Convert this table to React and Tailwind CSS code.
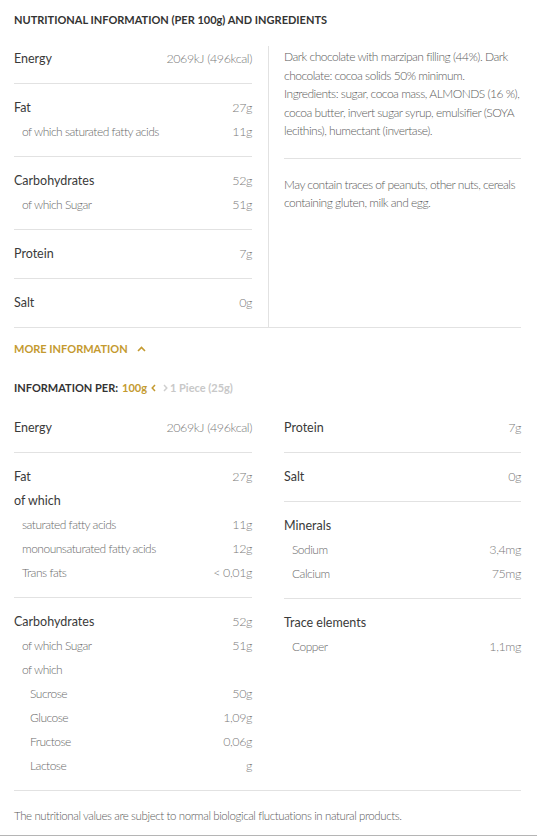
import React from "react";

const Row = ({ label, value, indent = 0 }) => (
  <div className="flex h-6 items-center justify-between">
    <span
      className={
        indent === 2
          ? "pl-4 text-[12px] font-light tracking-[-0.5px] text-[#6a6a6a]"
          : indent === 1
          ? "pl-2 text-[12px] font-light tracking-[-0.5px] text-[#6a6a6a]"
          : "text-[12.5px] text-[#3a3a3a]"
      }
    >
      {label}
    </span>
    <span className="text-[12.5px] font-light tracking-[-0.4px] text-[#7a7a7a]">{value}</span>
  </div>
);

const Group = ({ children, border = true }) => (
  <div className={"py-3 " + (border ? "border-b border-[#e2e2e2]" : "")}>{children}</div>
);

const ChevronUp = ({ className }) => (
  <svg className={className} width="9" height="6" viewBox="0 0 9 6" fill="none">
    <path d="M1 5 L4.5 1.5 L8 5" stroke="currentColor" strokeWidth="1.6" />
  </svg>
);

const ChevronLeft = ({ className }) => (
  <svg className={className} width="5" height="8" viewBox="0 0 5 8" fill="none">
    <path d="M4 1 L1.2 4 L4 7" stroke="currentColor" strokeWidth="1.5" />
  </svg>
);

const ChevronRight = ({ className }) => (
  <svg className={className} width="5" height="8" viewBox="0 0 5 8" fill="none">
    <path d="M1 1 L3.8 4 L1 7" stroke="currentColor" strokeWidth="1.5" />
  </svg>
);

export default function App() {
  return (
    <div className="w-[537px] bg-white font-['Lato',sans-serif] border-b border-[#b5b5b5]">
      <div className="pl-[14px] pr-[16px]">
        <h2 className="pt-[13px] text-[11px] leading-[14px] font-bold text-[#333]">
          NUTRITIONAL INFORMATION (PER 100g) AND INGREDIENTS
        </h2>

        <div className="mt-[8px] flex border-b border-[#e2e2e2]">
          <div className="w-[238px] shrink-0">
            <Group>
              <Row label="Energy" value="2069kJ (496kcal)" />
            </Group>
            <Group>
              <Row label="Fat" value="27g" />
              <Row label="of which saturated fatty acids" value="11g" indent={1} />
            </Group>
            <Group>
              <Row label="Carbohydrates" value="52g" />
              <Row label="of which Sugar" value="51g" indent={1} />
            </Group>
            <Group>
              <Row label="Protein" value="7g" />
            </Group>
            <Group border={false}>
              <Row label="Salt" value="0g" />
            </Group>
          </div>
          <div className="ml-[16px] mt-[11px] flex-1 border-l border-[#e2e2e2] pl-[15px] text-[12px] leading-[18.5px] font-light tracking-[-0.5px] text-[#5c5c5c]">
            <p className="pt-[2px] pb-[17px] border-b border-[#e2e2e2]">
              Dark chocolate with marzipan filling (44%). Dark chocolate: cocoa solids 50% minimum. Ingredients: sugar, cocoa mass, ALMONDS (16 %), cocoa butter, invert sugar syrup, emulsifier (SOYA lecithins), humectant (invertase).
            </p>
            <p className="pt-[17px]">
              May contain traces of peanuts, other nuts, cereals containing gluten, milk and egg.
            </p>
          </div>
        </div>

        <div className="mt-[14px] flex items-center gap-[9px] text-[11px] leading-[14px] font-bold uppercase text-[#c49a30]">
          <span>MORE INFORMATION</span>
          <ChevronUp className="text-[#c49a30]" />
        </div>

        <div className="mt-[25px] flex items-center text-[11px] leading-[14px] font-bold text-[#333]">
          <span>INFORMATION PER:</span>
          <span className="ml-[4px] text-[#c49a30]">100g</span>
          <ChevronLeft className="ml-[4px] text-[#c49a30]" />
          <ChevronRight className="ml-[7px] text-[#cfcfcf]" />
          <span className="ml-[2px] text-[#c8c8c8]">1 Piece (25g)</span>
        </div>

        <div className="mt-[9px] flex border-b border-[#e2e2e2]">
          <div className="w-[238px] shrink-0">
            <Group>
              <Row label="Energy" value="2069kJ (496kcal)" />
            </Group>
            <Group>
              <Row label="Fat" value="27g" />
              <Row label="of which" value="" />
              <Row label="saturated fatty acids" value="11g" indent={1} />
              <Row label="monounsaturated fatty acids" value="12g" indent={1} />
              <Row label="Trans fats" value="< 0,01g" indent={1} />
            </Group>
            <Group border={false}>
              <Row label="Carbohydrates" value="52g" />
              <Row label="of which Sugar" value="51g" indent={1} />
              <Row label="of which" value="" indent={1} />
              <Row label="Sucrose" value="50g" indent={2} />
              <Row label="Glucose" value="1,09g" indent={2} />
              <Row label="Fructose" value="0,06g" indent={2} />
              <Row label="Lactose" value="g" indent={2} />
            </Group>
          </div>
          <div className="ml-[32px] flex-1">
            <Group>
              <Row label="Protein" value="7g" />
            </Group>
            <Group>
              <Row label="Salt" value="0g" />
            </Group>
            <Group>
              <Row label="Minerals" value="" />
              <Row label="Sodium" value="3,4mg" indent={1} />
              <Row label="Calcium" value="75mg" indent={1} />
            </Group>
            <Group border={false}>
              <Row label="Trace elements" value="" />
              <Row label="Copper" value="1,1mg" indent={1} />
            </Group>
          </div>
        </div>

        <p className="mt-[18px] pb-[12px] text-[11.5px] leading-[14px] font-light tracking-[-0.4px] text-[#5c5c5c]">
          The nutritional values are subject to normal biological fluctuations in natural products.
        </p>
      </div>
    </div>
  );
}
